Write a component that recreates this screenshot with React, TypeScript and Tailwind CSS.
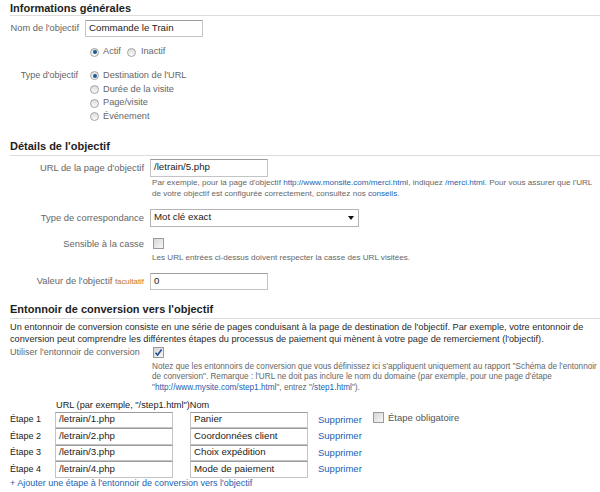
import React from 'react';

const Radio = ({ checked = false }: { checked?: boolean }) => (
  <span className="w-[9px] h-[9px] rounded-full border border-[#a3a3a3] bg-gradient-to-b from-[#dcdcdc] to-[#fbfbfb] flex items-center justify-center shrink-0">
    {checked && <span className="w-[4px] h-[4px] rounded-full bg-[#1d5a93]" />}
  </span>
);

const Checkbox = ({ checked = false }: { checked?: boolean }) => (
  <span className="w-[11px] h-[11px] border border-[#9a9a9a] bg-gradient-to-br from-[#d6d6d6] to-[#f7f7f7] flex items-center justify-center shrink-0">
    {checked && (
      <svg width="9" height="9" viewBox="0 0 9 9">
        <path d="M1.5 4.8 L3.6 7 L7.6 1.6" fill="none" stroke="#1d4f9a" strokeWidth="1.6" />
      </svg>
    )}
  </span>
);

const Input = ({ value, w = 'w-[118px]', h = 'h-[17px]' }: { value: string; w?: string; h?: string }) => (
  <div className={`${w} ${h} border border-[#c4c4c4] border-t-[#9c9c9c] bg-white flex items-center pl-[3px] text-[9.7px] text-[#222] shrink-0`}>
    {value}
  </div>
);

const Heading = ({ children, className = '' }: { children: React.ReactNode; className?: string }) => (
  <h2 className={`text-[11px] font-bold text-[#1e1e1e] leading-[13px] border-b border-[#dcdcdc] ${className}`}>{children}</h2>
);

const steps = [
  { url: '/letrain/1.php', name: 'Panier' },
  { url: '/letrain/2.php', name: 'Coordonnées client' },
  { url: '/letrain/3.php', name: 'Choix expédition' },
  { url: '/letrain/4.php', name: 'Mode de paiement' },
];

export default function App() {
  return (
    <div className="w-[600px] h-[492px] overflow-hidden bg-white pl-[10px] font-['Liberation_Sans',Arial,sans-serif] text-[#666]">
      {/* Informations générales */}
      <Heading className="pt-[2px]">Informations générales</Heading>

      <div className="mt-[4px] flex items-center h-[17px]">
        <span className="w-[69px] text-right text-[9.3px] whitespace-nowrap">Nom de l'objectif</span>
        <div className="ml-[6px]">
          <Input value="Commande le Train" />
        </div>
      </div>

      <div className="mt-[8px] h-[14px] flex items-center pl-[80px] text-[9.2px]">
        <Radio checked />
        <span className="ml-[4px]">Actif</span>
        <span className="ml-[6px]"><Radio /></span>
        <span className="ml-[5px]">Inactif</span>
      </div>

      <div className="mt-[10px] flex text-[9.2px]">
        <span className="w-[68px] text-right text-[9px] leading-[13.7px]">Type d'objectif</span>
        <div className="ml-[12px] flex flex-col">
          {['Destination de l\'URL', 'Durée de la visite', 'Page/visite', 'Événement'].map((t, i) => (
            <div key={t} className="h-[13.7px] flex items-center">
              <Radio checked={i === 0} />
              <span className="ml-[4px]">{t}</span>
            </div>
          ))}
        </div>
      </div>

      {/* Détails de l'objectif */}
      <Heading className="mt-[16px] pb-[2px]">Détails de l'objectif</Heading>

      <div className="mt-[3px] flex items-center h-[18px]">
        <span className="w-[134px] text-right text-[9.4px]">URL de la page d'objectif</span>
        <div className="ml-[6px]">
          <Input value="/letrain/5.php" h="h-[18px]" />
        </div>
      </div>
      <p className="pl-[142px] text-[8.1px] leading-[11px] whitespace-nowrap">
        Par exemple, pour la page d'objectif <span className="text-[#1b5fb0]">http://www.monsite.com/merci.html</span>, indiquez{' '}
        <span className="text-[#1b5fb0]">/merci.html</span>. Pour vous assurer que l'URL
        <br />
        de votre objectif est configurée correctement, consultez nos <span className="text-[#1b5fb0]">conseils</span>.
      </p>

      <div className="mt-[10px] flex items-center h-[18px]">
        <span className="w-[134px] text-right text-[9.4px]">Type de correspondance</span>
        <div className="ml-[6px] w-[209px] h-[18px] border border-[#b4b4b4] bg-white flex items-center justify-between pl-[3px] pr-[4px] text-[9.7px] text-[#222]">
          <span>Mot clé exact</span>
          <span className="w-0 h-0 border-l-[3.5px] border-r-[3.5px] border-t-[4px] border-l-transparent border-r-transparent border-t-[#111]" />
        </div>
      </div>

      <div className="mt-[11px] flex items-center h-[12px]">
        <span className="w-[134px] text-right text-[9.4px]">Sensible à la casse</span>
        <span className="ml-[9px]"><Checkbox /></span>
      </div>
      <p className="mt-[2.5px] pl-[142px] text-[8.1px] leading-[11px] whitespace-nowrap">
        Les URL entrées ci-dessus doivent respecter la casse des URL visitées.
      </p>

      <div className="mt-[9.5px] flex items-center h-[17px]">
        <span className="w-[134px] text-right text-[9.4px] whitespace-nowrap">
          Valeur de l'objectif <span className="text-[7.8px] text-[#c0751a]">facultatif</span>
        </span>
        <div className="ml-[6px]">
          <Input value="0" />
        </div>
      </div>

      {/* Entonnoir de conversion */}
      <Heading className="mt-[13px] pb-[2px]">Entonnoir de conversion vers l'objectif</Heading>

      <p className="mt-[2px] text-[9.2px] leading-[12.5px] text-[#2a2a2a] whitespace-nowrap">
        Un entonnoir de conversion consiste en une série de pages conduisant à la page de destination de l'objectif. Par exemple, votre entonnoir de
        <br />
        conversion peut comprendre les différentes étapes du processus de paiement qui mènent à votre page de remerciement (l'objectif).
      </p>

      <div className="mt-[1px] flex items-center h-[12px]">
        <span className="w-[143px] text-[9px]">Utiliser l'entonnoir de conversion</span>
        <Checkbox checked />
      </div>
      <p className="mt-[2.75px] pl-[142px] text-[8.2px] leading-[10.5px] whitespace-nowrap">
        Notez que les entonnoirs de conversion que vous définissez ici s'appliquent uniquement au rapport "Schéma de l'entonnoir
        <br />
        de conversion". Remarque : l'URL ne doit pas inclure le nom du domaine (par exemple, pour une page d'étape
        <br />
        "<span className="text-[#1b5fb0]">http://www.mysite.com/step1.html</span>", entrez "<span className="text-[#1b5fb0]">/step1.html</span>").
      </p>

      <div className="mt-[6px] pl-[46px] h-[12px] leading-[12px] text-[9.2px] text-[#222] whitespace-nowrap">
        URL (par exemple, "/step1.html")Nom
      </div>

      <div className="mt-[0.5px] flex flex-col">
        {steps.map((s, i) => (
          <div key={s.url} className="h-[16.5px] flex items-center text-[9.5px]">
            <span className="w-[45px] text-[9px] text-[#222]">Étape {i + 1}</span>
            <Input value={s.url} h="h-[16.5px]" />
            <div className="ml-[17px]">
              <Input value={s.name} h="h-[16.5px]" />
            </div>
            <span className="ml-[10px] w-[55px] text-[#1b5fb0]">Supprimer</span>
            {i === 0 && (
              <div className="flex items-center -mt-[4px]">
                <Checkbox />
                <span className="ml-[4px] text-[#555]">Étape obligatoire</span>
              </div>
            )}
          </div>
        ))}
      </div>

      <div className="mt-[0px] h-[10px] leading-[10px] text-[9px] text-[#1b5fb0] whitespace-nowrap">
        + Ajouter une étape à l'entonnoir de conversion vers l'objectif
      </div>
    </div>
  );
}
